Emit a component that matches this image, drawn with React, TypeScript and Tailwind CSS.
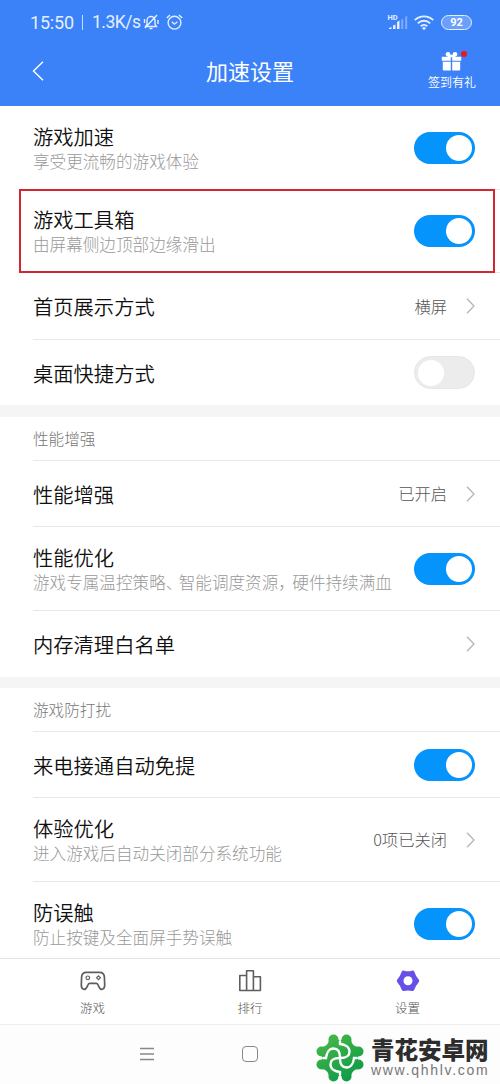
import type { ReactNode } from 'react';

function Toggle({ on = false }: { on?: boolean }) {
  return (
    <span
      className={
        on
          ? 'flex h-8 w-[61px] items-center justify-end rounded-full bg-[#0593fc] p-[3px]'
          : 'flex h-[33px] w-[61px] items-center justify-start rounded-full border border-[#e6e6e6] bg-[#ececec] p-[3px]'
      }
    >
      <span className="size-[26px] rounded-full bg-white" />
    </span>
  );
}

function Chevron() {
  return (
    <svg className="ml-[19px] h-4 w-[9px]" viewBox="0 0 9 16" fill="none" stroke="#b4b4b4" strokeWidth="1.3">
      <path d="M1 .8 8 8l-7 7.2" />
    </svg>
  );
}

interface RowProps {
  title: string;
  desc?: ReactNode;
  value?: string;
  toggle?: boolean;
  height: string;
  last?: boolean;
}

function Row({ title, desc, value, toggle, height, last }: RowProps) {
  return (
    <div
      className={`ml-[33px] flex shrink-0 items-center justify-between pr-[25px] ${height} ${
        last ? '' : 'border-b border-[#e8e8e8]'
      }`}
    >
      <div className="whitespace-nowrap">
        <div className="text-[20.3px] font-[350] leading-[26px] text-[#101010]">{title}</div>
        {desc && <div className="text-[16.6px] font-light leading-6 text-[#999]">{desc}</div>}
      </div>
      {toggle !== undefined ? (
        <Toggle on={toggle} />
      ) : (
        <div className="flex items-center text-[16.3px] font-light text-[#555]">
          {value}
          <Chevron />
        </div>
      )}
    </div>
  );
}

function SectionTitle({ children }: { children: string }) {
  return (
    <div className="ml-[33px] flex h-11 shrink-0 items-center border-b border-[#e8e8e8] text-[15.6px] font-light text-[#777]">
      {children}
    </div>
  );
}

function StatusBar() {
  return (
    <div className="flex h-11 items-center pl-[30px] pr-7 text-[#e4eeff]">
      <span className="w-[44px] pt-px font-[Roboto,sans-serif] text-[18px] leading-none tracking-[-.2px]">15:50</span>
      <span className="ml-2 mr-[9px] h-[15px] w-px bg-[#c8dcff]" />
      <span className="w-[48px] pt-px font-[Roboto,sans-serif] text-[17.5px] leading-none tracking-[-.5px]">1.3K/s</span>
      <svg className="ml-[3px] size-4" viewBox="0 0 16 16" fill="none" stroke="currentColor" strokeWidth="1.4">
        <path d="M2.5 12.5h11L12 10V6.5a4 4 0 0 0-8 0V10zM6.5 14.5h3M2 14 14 1M1.5 5v4M15 6v4" />
      </svg>
      <svg className="ml-[7px] h-4 w-[17px]" viewBox="0 0 17 16" fill="none" stroke="currentColor" strokeWidth="1.4">
        <circle cx="8.5" cy="8.7" r="6.4" />
        <path d="m5.8 7.8 2.6 2.4 3-2.4M.8 4 4 1M16.2 4 13 1" />
      </svg>
      <svg className="ml-auto h-[17px] w-[20px] overflow-visible" viewBox="0 0 20 17" fill="currentColor">
        <path d="M1 15h2.5v-2L1 14zM5 15h2.5v-4.500L5 11.500zM9 15h2.500V6.500L9 8z" />
        <path d="M13.200 15h2V4.500l-2 1.500zM17.200 15h2V1.500l-2 1.500z" opacity=".4" />
        <text x="-.5" y="5.500" fontSize="7.500" fontWeight="700" fontFamily="Roboto, sans-serif">HD</text>
      </svg>
      <svg className="ml-[6px] h-[15px] w-5" viewBox="0 0 20 15" fill="none" stroke="currentColor" strokeWidth="1.9">
        <path d="M.8 5.2a13 13 0 0 1 18.4 0M3.8 8.3a8.8 8.8 0 0 1 12.4 0M6.8 11.2a4.6 4.6 0 0 1 6.4 0" />
        <circle cx="10" cy="13.2" r="1.5" fill="currentColor" stroke="none" />
      </svg>
      <span className="ml-[7px] flex h-[15px] w-[31px] items-center justify-center rounded-full border-[1.5px] border-[#e4eeff] bg-[#6ba0fa] font-[Roboto,sans-serif] text-[11px] font-bold leading-none text-white">
        92
      </span>
    </div>
  );
}

function Header() {
  return (
    <header className="h-[106px] shrink-0 bg-[#3b82f8]">
      <StatusBar />
      <div className="grid h-[54px] grid-cols-[1fr_auto_1fr] items-center text-white">
        <svg className="ml-8 h-5 w-3" viewBox="0 0 12 20" fill="none" stroke="currentColor" strokeWidth="1.4">
          <path d="M11 .8 1.5 10l9.5 9.2" />
        </svg>
        <h1 className="pb-0.5 text-[22px]">加速设置</h1>
        <div className="relative mr-[24px] flex flex-col items-center justify-self-end pt-0.5">
          <svg className="h-5 w-[21px]" viewBox="0 0 21 20" fill="currentColor">
            <path d="M.8 5.8h9v4h-9zM11.2 5.8h9v4h-9zM1.8 10.8h8v8.700h-7a1 1 0 0 1-1-1zM11.2 10.8h8v7.700a1 1 0 0 1-1 1h-7z" />
            <circle cx="7" cy="3.2" r="2.3" />
            <circle cx="14" cy="3.2" r="2.3" />
            <path d="M6 3.8h9l-1 2.5H7z" />
          </svg>
          <span className="absolute right-[9px] top-0.5 size-1.5 rounded-full bg-[#f01420]" />
          <span className="text-[12px] font-[350] leading-[22px]">签到有礼</span>
        </div>
      </div>
    </header>
  );
}

function Tab({ label, children }: { label: string; children: ReactNode }) {
  return (
    <div className="flex w-[157.5px] flex-col items-center pt-[9px]">
      {children}
      <span className="mt-1">{label}</span>
    </div>
  );
}

function TabBar() {
  return (
    <nav className="flex h-[66px] shrink-0 justify-center border-t border-[#e4e4e4] bg-white text-[12.5px] font-light leading-5 text-[#555]">
      <Tab label="游戏">
        <svg className="size-[26px]" viewBox="0 0 26 26" fill="none" stroke="#5e5e5e" strokeWidth="1.7">
          <path d="M6.5 4.300h13c3.300 0 4.800 1.800 4.900 4.800l.3 8c.1 4.800-4 5.500-5.600 2l-1.300-2.800c-.3-.7-.7-1-1.500-1H9.700c-.8 0-1.200.3-1.500 1l-1.300 2.800c-1.600 3.500-5.700 2.800-5.600-2l.3-8c.1-3 1.600-4.800 4.900-4.800z" />
          <circle cx="7.8" cy="9.8" r="1.8" strokeWidth="1.2" />
          <path d="m18.5 7.9 1.9 1.9-1.9 1.9-1.9-1.9z" strokeWidth="1.2" />
        </svg>
      </Tab>
      <Tab label="排行">
        <svg className="size-[26px]" viewBox="0 0 26 26" fill="none" stroke="#5e5e5e" strokeWidth="1.6" strokeLinejoin="round">
          <path d="M2.8 22.5V7.5h6.8v15zM9.6 22.5V2.8h6.8v19.7zM16.4 22.5V8.800h7v13.700z" />
        </svg>
      </Tab>
      <Tab label="设置">
        <svg className="size-[26px]" viewBox="0 0 26 26" fill="none" stroke="#6650e8" strokeLinejoin="round">
          <path
            fill="#6650e8"
            strokeWidth="4"
            d="M8.500 4.600Q13 5.800 17.500 4.600Q19 9.200 22.200 12.800Q19 16.400 17.500 21Q13 19.800 8.500 21Q7 16.400 3.800 12.800Q7 9.200 8.500 4.600z"
          />
          <circle cx="13" cy="12.800" r="4.500" fill="#fff" stroke="none" />
        </svg>
      </Tab>
    </nav>
  );
}

const QUARTERS = [0, 90, 180, 270];

function CloverLogo() {
  return (
    <svg className="size-12" viewBox="-24 -24 48 48">
      <defs>
        <linearGradient id="leaf" gradientUnits="userSpaceOnUse" x1="-14" y1="-22" x2="12" y2="22">
          <stop offset="0" stopColor="#45b748" />
          <stop offset="1" stopColor="#0f9a48" />
        </linearGradient>
      </defs>
      <g fill="url(#leaf)">
        <path d="M-11-18H11Q12-12 18-11V11Q12 12 11 18H-11Q-12 12-18 11V-11Q-12-12-11-18z" />
        <circle cx="-6.5" cy="-18.5" r="5" />
        <circle cx="6.5" cy="-18.5" r="5" />
        <circle cx="-6.5" cy="18.5" r="5" />
        <circle cx="6.5" cy="18.5" r="5" />
        <circle cx="-18.5" cy="-6.5" r="5" />
        <circle cx="-18.5" cy="6.5" r="5" />
        <circle cx="18.5" cy="-6.5" r="5" />
        <circle cx="18.5" cy="6.5" r="5" />
      </g>
      {QUARTERS.map((angle) => (
        <g key={angle} transform={`rotate(${angle})`}>
          <path d="M-24-1.5Q-18-1.5-14.5 0Q-18 1.5-24 1.5z" fill="#fff" />
          <path d="M-17 0h3C-13.500-5-11-9.500-6.500-9.500C-2-9.500 0-6.500 0 0" fill="none" stroke="#fff" strokeWidth="2.4" />
        </g>
      ))}
    </svg>
  );
}

function SystemNav() {
  return (
    <div className="flex h-[60px] shrink-0 items-start border-t border-[#ededed] bg-[#fdfdfd]">
      <svg className="ml-[139px] mt-[22px] size-4" viewBox="0 0 16 16" stroke="#888" strokeWidth="1.3">
        <path d="M1 1.5h14M1 7h14M1 12.5h14" />
      </svg>
      <span className="ml-[87px] mt-[21px] size-4 rounded-[4px] border-[1.5px] border-[#888]" />
      <div className="ml-[58px] mt-[9px] flex">
        <CloverLogo />
        <div className="ml-[7px] mt-[3px] whitespace-nowrap">
          <div className="text-[23.5px] font-black leading-[25px] text-[#2d2d2d]">青花安卓网</div>
          <div className="font-[Liberation_Sans,sans-serif] text-[14px] leading-4 tracking-[1.7px] text-[#777]">www.qhhlv.com</div>
        </div>
      </div>
    </div>
  );
}

export default function App() {
  return (
    <div className="flex h-[1084px] w-[500px] flex-col overflow-hidden bg-white font-[Noto_Sans_CJK_SC,sans-serif]">
      <Header />
      <main className="flex h-[852px] shrink-0 flex-col overflow-hidden">
        <Row title="游戏加速" desc="享受更流畅的游戏体验" toggle height="h-[84px]" />
        <div className="relative shrink-0">
          <Row title="游戏工具箱" desc="由屏幕侧边顶部边缘滑出" toggle height="h-[83px]" />
          <span className="absolute -top-px bottom-0 left-[19px] right-[5px] border-2 border-[#d22630]" />
        </div>
        <Row title="首页展示方式" value="横屏" height="h-[67px]" />
        <Row title="桌面快捷方式" toggle={false} height="h-[65px]" last />
        <div className="h-3 shrink-0 bg-[#f5f5f5]" />
        <SectionTitle>性能增强</SectionTitle>
        <Row title="性能增强" value="已开启" height="h-[66px]" />
        <Row
          title="性能优化"
          desc={
            <>
              游戏专属温控策略<span className="tracking-[-3.6px]">、</span>智能调度资源
              <span className="tracking-[-2.6px]">{'\uff0c'}</span>硬件持续满血
            </>
          }
          toggle
          height="h-[84px]"
        />
        <Row title="内存清理白名单" height="h-[66px]" last />
        <div className="h-[11px] shrink-0 bg-[#f5f5f5]" />
        <SectionTitle>游戏防打扰</SectionTitle>
        <Row title="来电接通自动免提" toggle height="h-[66px]" />
        <Row title="体验优化" desc="进入游戏后自动关闭部分系统功能" value="0项已关闭" height="h-[84px]" />
        <Row title="防误触" desc="防止按键及全面屏手势误触" toggle height="h-[83px]" last />
      </main>
      <TabBar />
      <SystemNav />
    </div>
  );
}
